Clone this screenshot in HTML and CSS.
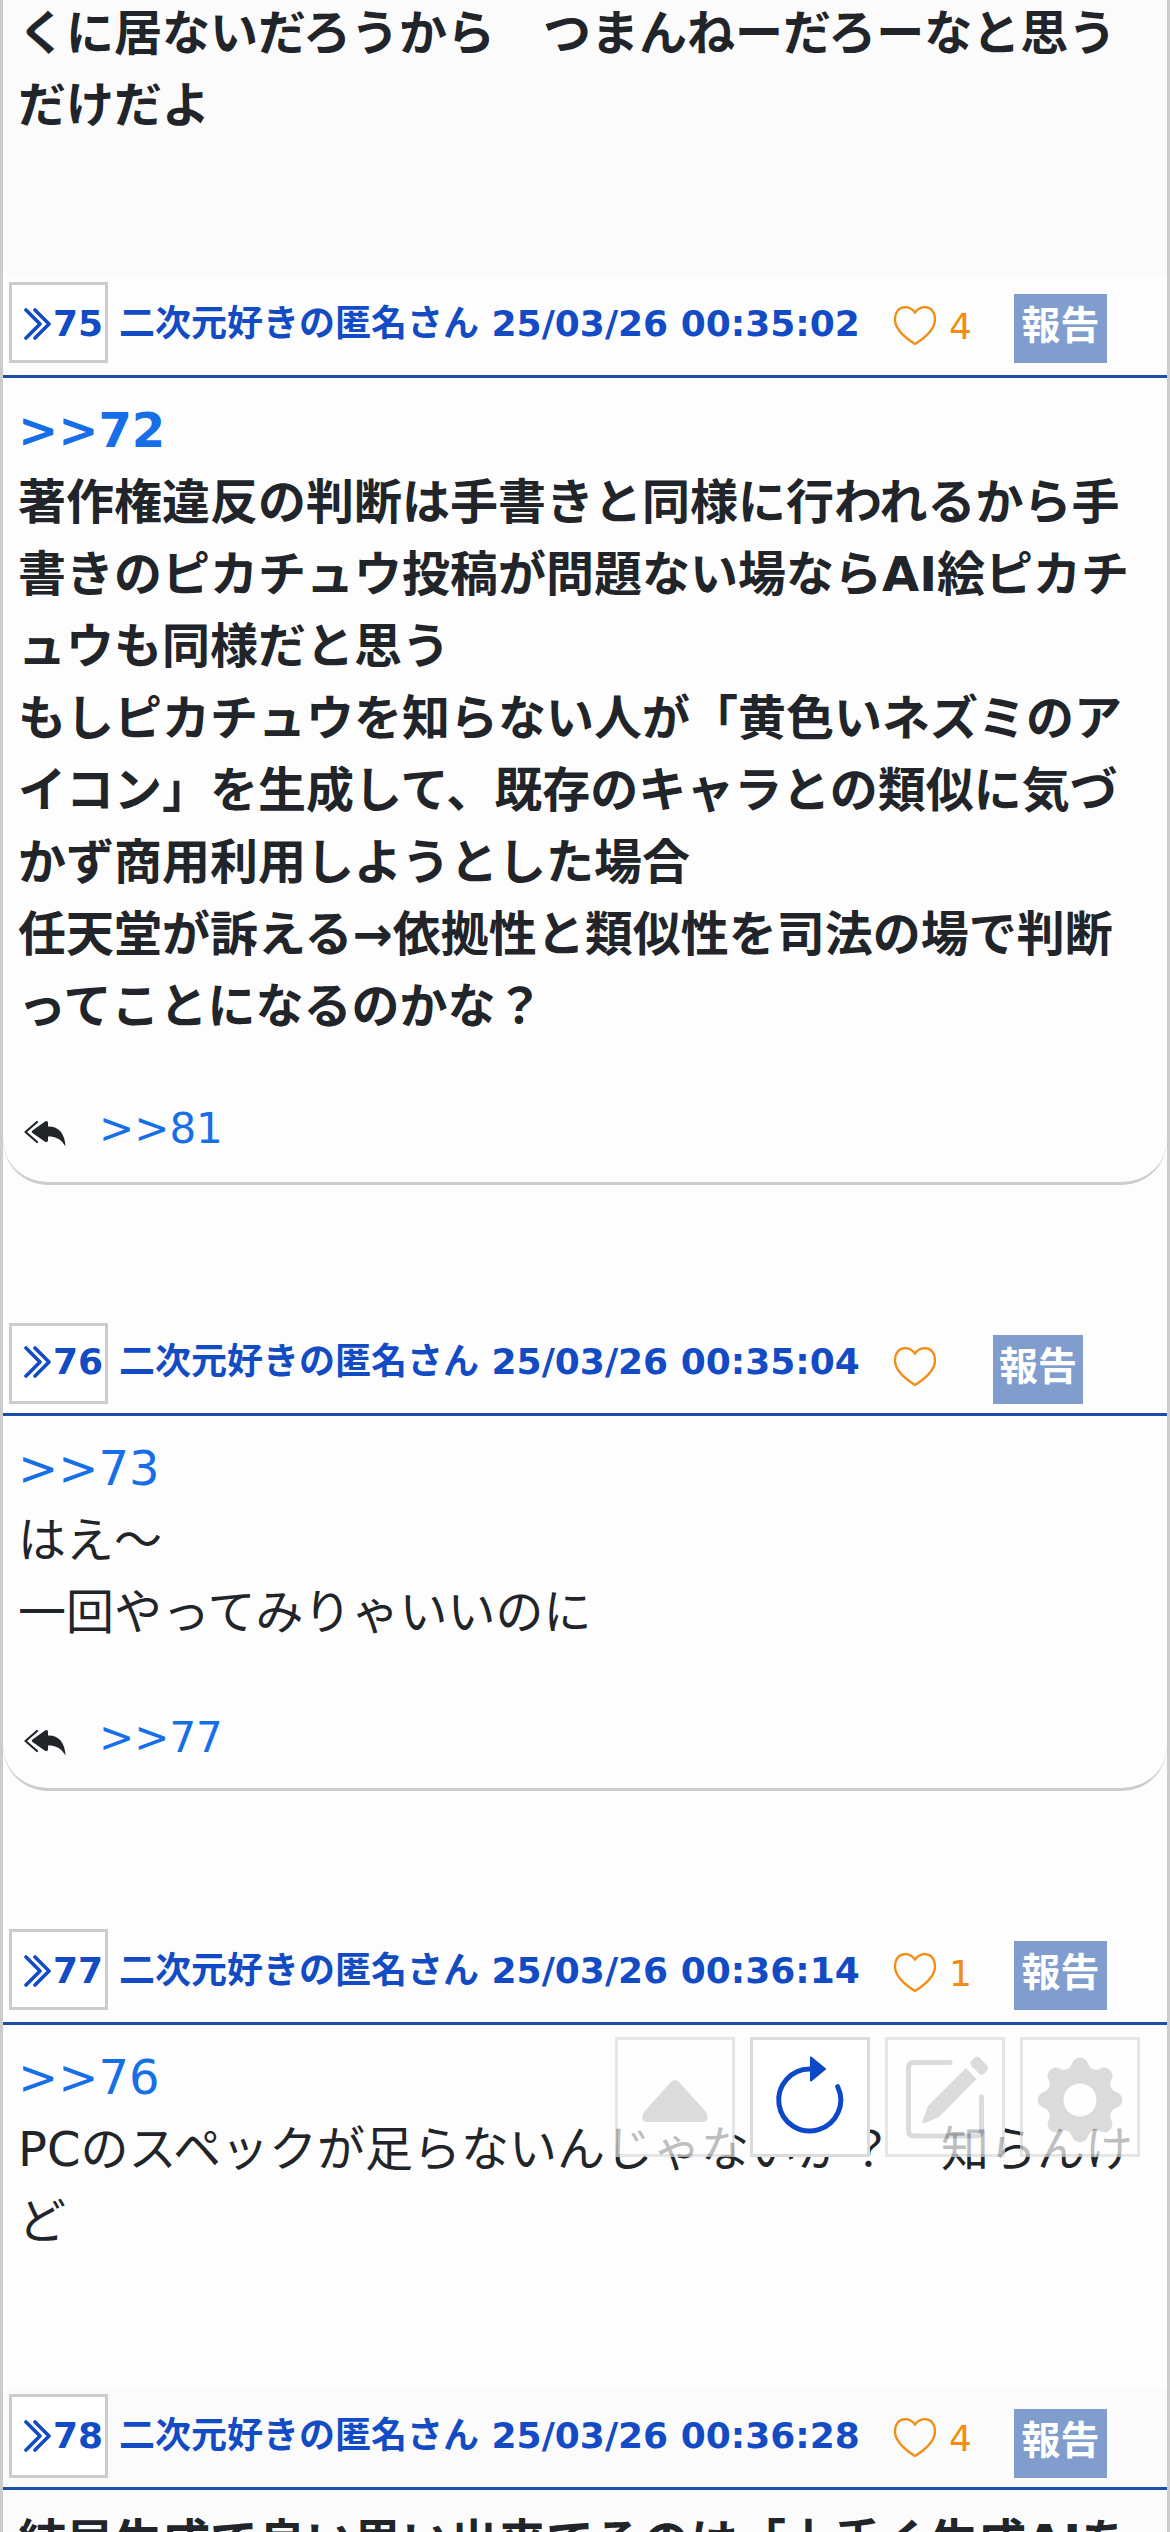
FILE: index.html
```
<!DOCTYPE html>
<html lang="ja">
<head>
<meta charset="utf-8">
<title>スレッド</title>
<link rel="stylesheet" href="styles.css">
</head>
<body>
<svg class="defs" width="0" height="0">
  <symbol id="quote" viewBox="0 0 27 32"><path d="M2 2l14 14L2 30M11 2l14 14L11 30" fill="none" stroke="currentColor" stroke-width="3.6" stroke-linecap="round" stroke-linejoin="round"/></symbol>
  <symbol id="heart" viewBox="0 0 42 40"><path d="M21 6.500C18 2.500 14 1.200 11 1.200C5 1.200 1 6 1 13.500C1 23 10 31 21 38C32 31 41 23 41 13.500C41 6 37 1.200 31 1.200C28 1.200 24 2.500 21 6.500Z" fill="none" stroke="currentColor" stroke-width="2.300"/></symbol>
  <symbol id="reply" viewBox="0 0 42 26"><path d="M13 1L1.500 11L13 21" fill="none" stroke="currentColor" stroke-width="2.200" stroke-linecap="round" stroke-linejoin="round"/><path d="M8.500 12Q7 11 8.500 9.500L21 .6Q24 -1 24 2V5.500C34 5 41 12 41.500 25.500C37 18 32 15.500 24 15.500V19Q24 22 21 20.800Z" fill="currentColor"/></symbol>
</svg>
<main class="thread">
  <article class="post post-cut">
    <div class="body strong">くに居ないだろうから　つまんねーだろーなと思うだけだよ</div>
  </article>

  <article class="post post-75">
    <header class="head">
      <a class="num"><svg class="quote"><use href="#quote"/></svg>75</a>
      <span class="name">二次元好きの匿名さん 25/03/26 00:35:02</span>
      <span class="like"><svg class="heart"><use href="#heart"/></svg>4</span>
      <button class="report">報告</button>
    </header>
    <div class="body strong"><a class="anchor">&gt;&gt;72</a><br>著作権違反の判断は手書きと同様に行われるから手書きのピカチュウ投稿が問題ない場ならAI絵ピカチュウも同様だと思う<br>もしピカチュウを知らない人が「黄色いネズミのアイコン」を生成して、既存のキャラとの類似に気づかず商用利用しようとした場合<br>任天堂が訴える→依拠性と類似性を司法の場で判断ってことになるのかな？</div>
    <footer class="replies"><svg class="reply"><use href="#reply"/></svg><a class="anchor">&gt;&gt;81</a></footer>
  </article>

  <article class="post post-76">
    <header class="head">
      <a class="num"><svg class="quote"><use href="#quote"/></svg>76</a>
      <span class="name">二次元好きの匿名さん 25/03/26 00:35:04</span>
      <span class="like none"><svg class="heart"><use href="#heart"/></svg></span>
      <button class="report narrow">報告</button>
    </header>
    <div class="body"><a class="anchor">&gt;&gt;73</a><br>はえ～<br>一回やってみりゃいいのに</div>
    <footer class="replies"><svg class="reply"><use href="#reply"/></svg><a class="anchor">&gt;&gt;77</a></footer>
  </article>

  <article class="post post-77">
    <header class="head">
      <a class="num"><svg class="quote"><use href="#quote"/></svg>77</a>
      <span class="name">二次元好きの匿名さん 25/03/26 00:36:14</span>
      <span class="like"><svg class="heart"><use href="#heart"/></svg>1</span>
      <button class="report">報告</button>
    </header>
    <div class="body"><a class="anchor">&gt;&gt;76</a><br>PCのスペックが足らないんじゃないか？　知らんけど</div>
  </article>

  <article class="post post-78">
    <header class="head">
      <a class="num"><svg class="quote"><use href="#quote"/></svg>78</a>
      <span class="name">二次元好きの匿名さん 25/03/26 00:36:28</span>
      <span class="like"><svg class="heart"><use href="#heart"/></svg>4</span>
      <button class="report">報告</button>
    </header>
    <div class="body strong">結局生成で良い思い出来てるのは「上手く生成AIを</div>
  </article>
</main>

<nav class="tools">
  <button class="tool dim"><svg viewBox="0 0 120 120"><path d="M55 46Q60 40 65 46L91 75Q96 85 87 85H33Q24 85 29 75Z" fill="#cecece"/></svg></button>
  <button class="tool"><svg viewBox="0 0 120 120"><path d="M60 32A31 31 0 1 0 87.700 49.700" fill="none" stroke="#0d48c8" stroke-width="5" stroke-linecap="round"/><path d="M61 20.500L75 32L61 43.500Z" fill="#0d48c8" stroke="#0d48c8" stroke-width="2" stroke-linejoin="round"/></svg></button>
  <button class="tool dim"><svg viewBox="0 0 120 120"><path d="M65 25.500H29Q23.500 25.500 23.500 31V93.500Q23.500 99 29 99H91Q96.500 99 96.500 93.500V60" fill="none" stroke="#cecece" stroke-width="5" stroke-linecap="round"/><path d="M81 31L91.500 42L54 80L38.500 86.500Q37 86 37.500 84L43 69Z" fill="#cecece"/><path d="M89 21Q92 18.500 95 21L102 28.500Q104 31 102 34L99 37Q96 39 94 36.500L86.500 29Q84.500 26.500 86.500 24Z" fill="#cecece"/></svg></button>
  <button class="tool dim"><svg viewBox="0 0 120 120"><path fill="#cecece" fill-rule="evenodd" d="M52 27A8.200 8.200 0 0 1 68 27A8.500 8.500 0 0 0 79.800 31.900A8.200 8.200 0 0 1 91.100 43.200A8.500 8.500 0 0 0 96 55A8.200 8.200 0 0 1 96 71A8.500 8.500 0 0 0 91.100 82.800A8.200 8.200 0 0 1 79.800 94.100A8.500 8.500 0 0 0 68 99A8.200 8.200 0 0 1 52 99A8.500 8.500 0 0 0 40.200 94.100A8.200 8.200 0 0 1 28.900 82.800A8.500 8.500 0 0 0 24 71A8.200 8.200 0 0 1 24 55A8.500 8.500 0 0 0 28.900 43.200A8.200 8.200 0 0 1 40.200 31.900A8.500 8.500 0 0 0 52 27ZM60 46.500A16.500 16.500 0 1 0 60 79.500A16.500 16.500 0 1 0 60 46.500Z"/></svg></button>
</nav>
</body>
</html>
```
FILE: styles.css
```
* { box-sizing: border-box; }

body {
  margin: 0;
  height: 2532px;
  overflow: hidden;
  background: #fdfdfd;
  color: #212529;
  font-family: "DejaVu Sans", "Noto Sans CJK JP", sans-serif;
}

svg { display: block; flex: none; overflow: visible; }
.defs { position: absolute; }
button { font-family: inherit; margin: 0; }

.thread {
  height: 2532px;
  overflow: hidden;
  border: solid #ccc;
  border-width: 0 3px;
}

.post-cut { height: 276px; background: #fbfbfb; overflow: hidden; }
.post-75 { height: 909px; }
.post-76 { height: 477px; margin-top: 129px; }
.post-77 { height: 465px; margin-top: 132px; }
.post-75, .post-76 {
  display: flex;
  flex-direction: column;
  border-bottom: 3px solid #ccc;
  border-radius: 0 0 45px 45px;
}
.post-78 { background: #fbfbfb; }

.head {
  display: flex;
  align-items: flex-start;
  flex: none;
  height: 102px;
  padding: 6px 0 0 6px;
  border-bottom: 3px solid #1c4cad;
  color: #134bc4;
  font-size: 36px;
  font-weight: bold;
  line-height: 54px;
  white-space: nowrap;
}

.num {
  display: flex;
  width: 99px;
  height: 81px;
  padding: 12px 0 0 12px;
  border: 3px solid #ccc;
  background: #fff;
}
.post-76 .num { margin-top: 3px; padding-top: 9px; }
.post-78 .num { height: 84px; }
.quote { width: 27px; height: 32px; margin: 11px 2px 0 0; }
.name { width: 742px; margin-left: 11px; padding-top: 15px; }
.like {
  display: flex;
  width: 120px;
  margin-left: 33px;
  padding-top: 18px;
  color: #f28c13;
  font-weight: normal;
}
.like.none { width: 99px; padding-top: 21px; }
.heart { width: 42px; height: 40px; margin: 6px 13px 0 0; }
.report {
  width: 93px;
  height: 69px;
  margin-top: 12px;
  padding: 0 0 5px;
  border: 0;
  background: #809dce;
  color: #fff;
  font-size: 39px;
  font-weight: bold;
  line-height: 60px;
}
.post-76 .report, .post-78 .report { margin-top: 15px; }
.report.narrow { width: 90px; }

.body {
  padding: 16px 12px 0 15px;
  font-size: 48px;
  line-height: 72px;
  overflow-wrap: anywhere;
}
.strong { font-weight: bold; }
.post-cut .body { padding-top: 0; margin-top: -3px; }
.anchor { color: #176fe8; }

.replies {
  display: flex;
  align-items: center;
  gap: 33px;
  height: 63px;
  margin: auto 0 22px;
  padding-left: 21px;
  font-size: 42px;
  line-height: 63px;
}
.post-76 .replies { margin-bottom: 19px; }
.reply { width: 42px; height: 26px; margin-top: 10px; }

.tools {
  position: absolute;
  top: 2037px;
  left: 615px;
  display: flex;
  gap: 15px;
}
.tool {
  width: 120px;
  height: 120px;
  padding: 0;
  border: 3px solid #dadcdb;
  background: #fff;
}
.tool svg { width: 120px; height: 120px; margin: -3px; }
.dim { opacity: .7; }
```
